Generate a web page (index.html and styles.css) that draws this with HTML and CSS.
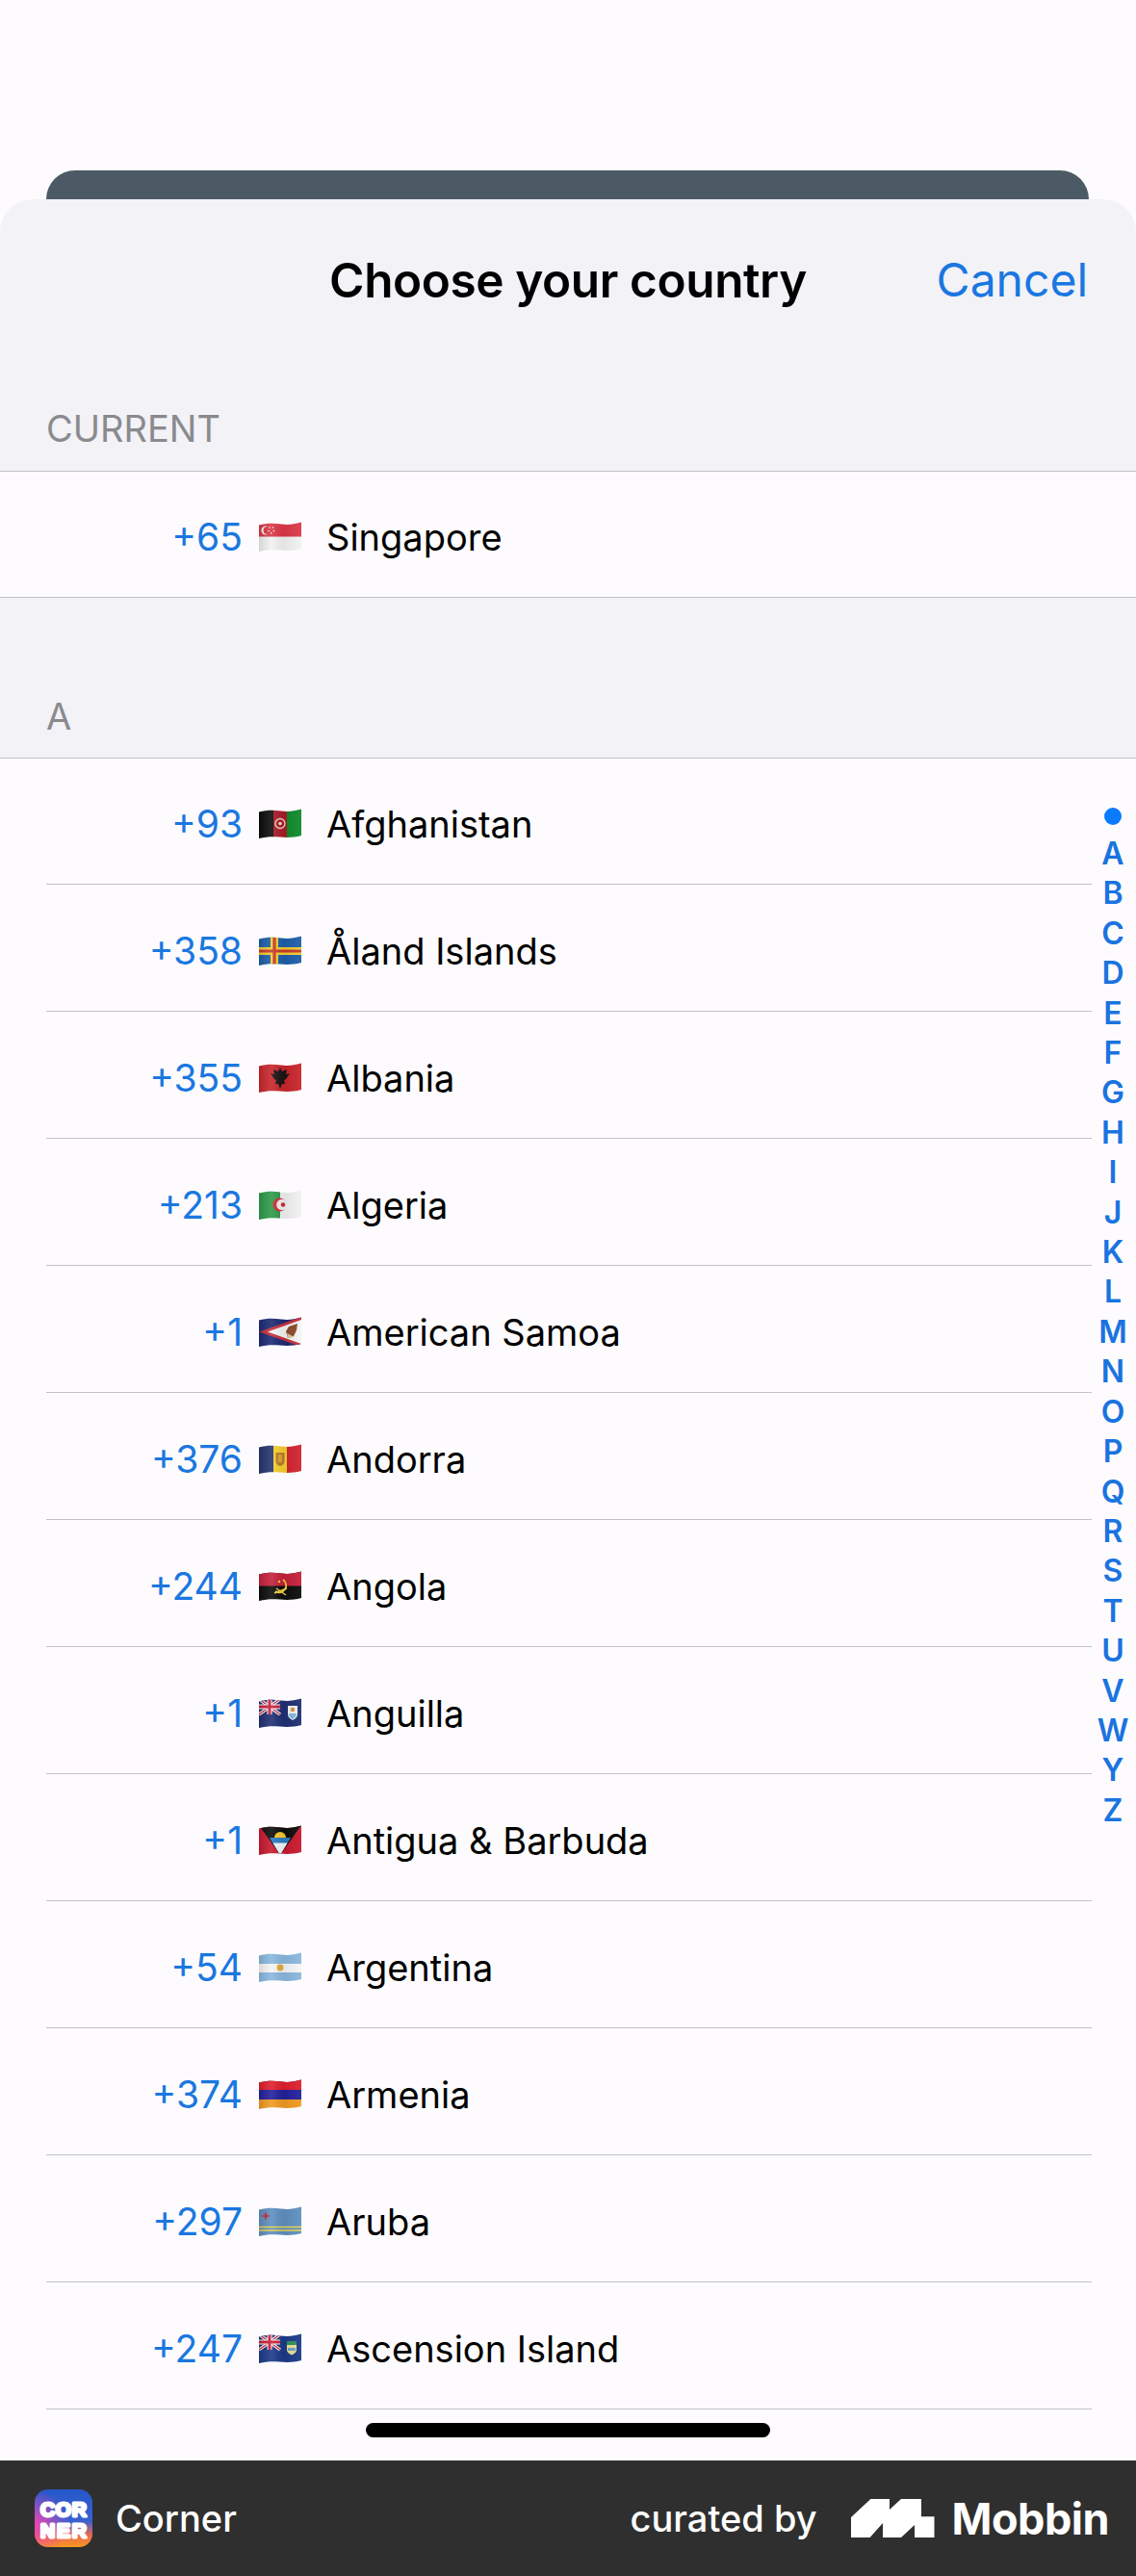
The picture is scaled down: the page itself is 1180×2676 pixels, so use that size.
FILE: index.html
```html
<!DOCTYPE html>
<html lang="en">
<head>
<meta charset="utf-8">
<title>Choose your country</title>
<link rel="stylesheet" href="styles.css">
</head>
<body>
<svg class="defs" width="0" height="0" aria-hidden="true">
  <defs>
    <clipPath id="w"><path d="M0 3.5C8 1.5 15 1.5 23 2.6S36 2.6 44 .5V28C36 30 30 30.4 22 29.6S8 29 0 31Z"/></clipPath>
    <linearGradient id="sh" x1="0" x2="1" y1="0" y2="0">
      <stop offset="0" stop-color="#000" stop-opacity=".12"/>
      <stop offset=".3" stop-color="#fff" stop-opacity=".1"/>
      <stop offset=".6" stop-color="#000" stop-opacity=".06"/>
      <stop offset="1" stop-color="#fff" stop-opacity=".06"/>
    </linearGradient>
    <linearGradient id="corner-bg" x1="0" x2="0" y1="0" y2="1">
      <stop offset="0" stop-color="#2457c9"/>
      <stop offset=".55" stop-color="#3a62d0"/>
      <stop offset=".8" stop-color="#f06a50"/>
      <stop offset="1" stop-color="#f79a1c"/>
    </linearGradient>
    <radialGradient id="corner-pink" cx="0" cy=".6" r=".6">
      <stop offset="0" stop-color="#ee44b0"/>
      <stop offset="1" stop-color="#ee44b0" stop-opacity="0"/>
    </radialGradient>
    <g id="uk">
      <rect width="22" height="16" fill="#1f2f73"/>
      <path d="M0 0L22 16M22 0L0 16" stroke="#fff" stroke-width="3.4"/>
      <path d="M0 0L22 16M22 0L0 16" stroke="#c8203a" stroke-width="1.2"/>
      <path d="M11 0V16M0 8H22" stroke="#fff" stroke-width="5"/>
      <path d="M11 0V16M0 8H22" stroke="#c8203a" stroke-width="3"/>
    </g>
  </defs>
</svg>

<main class="screen">
  <div class="back-card"></div>
  <section class="sheet">
    <header class="sheet-head">
      <h1 class="sheet-title">Choose your country</h1>
      <span class="cancel">Cancel</span>
    </header>

    <h2 class="section-label label-current">CURRENT</h2>
    <ul class="list list-current">
      <li class="row">
        <span class="code">+65</span>
        <svg class="flag" viewBox="0 0 44 32"><g clip-path="url(#w)"><rect width="44" height="32" fill="#f2f2f2"/><path d="M0 0H44V15.5H0Z" fill="#dc3848"/><circle cx="7" cy="9" r="4.6" fill="#f4f4f4"/><circle cx="8.6" cy="9" r="4" fill="#dc3848"/><g fill="#f4f4f4"><circle cx="11" cy="6" r=".8"/><circle cx="14.5" cy="6" r=".8"/><circle cx="10" cy="9.5" r=".8"/><circle cx="15.5" cy="9.5" r=".8"/><circle cx="12.7" cy="11.8" r=".8"/></g><rect width="44" height="32" fill="url(#sh)"/></g></svg>
        <span class="name">Singapore</span>
      </li>
    </ul>

    <h2 class="section-label label-a">A</h2>
    <ul class="list list-a">
      <li class="row inset">
        <span class="code">+93</span>
        <svg class="flag" viewBox="0 0 44 32"><g clip-path="url(#w)"><rect width="15" height="32" fill="#0c0c0c"/><rect x="15" width="15" height="32" fill="#a81c28"/><rect x="29" width="15" height="32" fill="#0f8a2c"/><circle cx="22" cy="15.5" r="5" fill="none" stroke="#f0d8c0" stroke-width="1.3"/><circle cx="22" cy="15.5" r="1.8" fill="#f0d8c0"/><rect width="44" height="32" fill="url(#sh)"/></g></svg>
        <span class="name">Afghanistan</span>
      </li>
      <li class="row inset">
        <span class="code">+358</span>
        <svg class="flag" viewBox="0 0 44 32"><g clip-path="url(#w)"><rect width="44" height="32" fill="#1d5ea8"/><path d="M0 16H44M16 0V32" stroke="#f2cb2e" stroke-width="8"/><path d="M0 16H44M16 0V32" stroke="#c83a2a" stroke-width="3.2"/><rect width="44" height="32" fill="url(#sh)"/></g></svg>
        <span class="name">Åland Islands</span>
      </li>
      <li class="row inset">
        <span class="code">+355</span>
        <svg class="flag" viewBox="0 0 44 32"><g clip-path="url(#w)"><rect width="44" height="32" fill="#c8262c"/><path d="M22 5L24 9L29 7L28 12L32 11L28 17L26 18L27 22L24 22L22 27L20 22L17 22L18 18L16 17L12 11L16 12L15 7L20 9Z" fill="#1a1414"/><rect width="44" height="32" fill="url(#sh)"/></g></svg>
        <span class="name">Albania</span>
      </li>
      <li class="row inset">
        <span class="code">+213</span>
        <svg class="flag" viewBox="0 0 44 32"><g clip-path="url(#w)"><rect width="44" height="32" fill="#f1f1f1"/><rect width="22" height="32" fill="#2f9a4a"/><circle cx="21.5" cy="15.5" r="7" fill="#d42a3a"/><circle cx="24" cy="15.5" r="5.8" fill="#f1f1f1"/><circle cx="25" cy="15.5" r="2.3" fill="#d42a3a"/><rect width="44" height="32" fill="url(#sh)"/></g></svg>
        <span class="name">Algeria</span>
      </li>
      <li class="row inset">
        <span class="code">+1</span>
        <svg class="flag" viewBox="0 0 44 32"><g clip-path="url(#w)"><rect width="44" height="32" fill="#1c2a74"/><path d="M44 0L0 15.5L44 31Z" fill="#c4303c"/><path d="M44 3L9 15.5L44 28Z" fill="#f4f4f4"/><path d="M31 10L40 7L39 14L36 20L30 22L28 15Z" fill="#8a4a2c"/><path d="M29 17L37 21L30 22Z" fill="#d8c89a"/><rect width="44" height="32" fill="url(#sh)"/></g></svg>
        <span class="name">American Samoa</span>
      </li>
      <li class="row inset">
        <span class="code">+376</span>
        <svg class="flag" viewBox="0 0 44 32"><g clip-path="url(#w)"><rect width="15" height="32" fill="#25356f"/><rect x="15" width="14" height="32" fill="#f5cf2f"/><rect x="29" width="15" height="32" fill="#d2232f"/><path d="M17.5 9H26.5V18C26.5 21 24 22.5 22 23C20 22.5 17.5 21 17.5 18Z" fill="#bc7a2a"/><path d="M20 11H24V19H20Z" fill="#d9a431"/><rect width="44" height="32" fill="url(#sh)"/></g></svg>
        <span class="name">Andorra</span>
      </li>
      <li class="row inset">
        <span class="code">+244</span>
        <svg class="flag" viewBox="0 0 44 32"><g clip-path="url(#w)"><rect width="44" height="32" fill="#0c0c0c"/><rect width="44" height="15.5" fill="#c4213a"/><path d="M25 9A7 7 0 1 1 17 21" fill="none" stroke="#f0d040" stroke-width="1.8"/><path d="M16 23L29 18M18 18L28 25" stroke="#f0d040" stroke-width="1.5"/><circle cx="21" cy="11" r="1.2" fill="#f0d040"/><rect width="44" height="32" fill="url(#sh)"/></g></svg>
        <span class="name">Angola</span>
      </li>
      <li class="row inset">
        <span class="code">+1</span>
        <svg class="flag" viewBox="0 0 44 32"><g clip-path="url(#w)"><rect width="44" height="32" fill="#1f2f73"/><use href="#uk" y="1"/><path d="M30 8H40V17C40 20 37 22 35 23C33 22 30 20 30 17Z" fill="#f0f0f0"/><path d="M31 16H39C39 19 37 21 35 22C33 21 31 19 31 16Z" fill="#7fb8dc"/><circle cx="35" cy="12" r="2.2" fill="#d09040"/><rect width="44" height="32" fill="url(#sh)"/></g></svg>
        <span class="name">Anguilla</span>
      </li>
      <li class="row inset">
        <span class="code">+1</span>
        <svg class="flag" viewBox="0 0 44 32"><g clip-path="url(#w)"><rect width="44" height="32" fill="#c8182e"/><path d="M0 0H44L22 31Z" fill="#0c0c0c"/><circle cx="22" cy="13" r="6" fill="#f5c52c"/><path d="M11 13H33L22 31Z" fill="#2b7cc4"/><path d="M14.5 18.5H29.5L22 31Z" fill="#f4f4f4"/><rect width="44" height="32" fill="url(#sh)"/></g></svg>
        <span class="name">Antigua &amp; Barbuda</span>
      </li>
      <li class="row inset">
        <span class="code">+54</span>
        <svg class="flag" viewBox="0 0 44 32"><g clip-path="url(#w)"><rect width="44" height="32" fill="#8ab8df"/><path d="M0 12H44V21H0Z" fill="#f5f5f5"/><circle cx="22" cy="16" r="3.4" fill="#e3a93a"/><rect width="44" height="32" fill="url(#sh)"/></g></svg>
        <span class="name">Argentina</span>
      </li>
      <li class="row inset">
        <span class="code">+374</span>
        <svg class="flag" viewBox="0 0 44 32"><g clip-path="url(#w)"><rect width="44" height="32" fill="#f09a20"/><rect width="44" height="21" fill="#23209c"/><rect width="44" height="11" fill="#e01f2d"/><rect width="44" height="32" fill="url(#sh)"/></g></svg>
        <span class="name">Armenia</span>
      </li>
      <li class="row inset">
        <span class="code">+297</span>
        <svg class="flag" viewBox="0 0 44 32"><g clip-path="url(#w)"><rect width="44" height="32" fill="#5f8fc0"/><path d="M0 21.5H44M0 25H44" stroke="#f0d84a" stroke-width="1.5"/><path d="M7 5L8.3 9L12 10L8.3 11L7 15L5.7 11L2 10L5.7 9Z" fill="#c8243a"/><rect width="44" height="32" fill="url(#sh)"/></g></svg>
        <span class="name">Aruba</span>
      </li>
      <li class="row inset">
        <span class="code">+247</span>
        <svg class="flag" viewBox="0 0 44 32"><g clip-path="url(#w)"><rect width="44" height="32" fill="#1c3a88"/><use href="#uk" y="1"/><path d="M29 8H39V17C39 20 36 21.5 34 22.5C32 21.5 29 20 29 17Z" fill="#e8e090"/><path d="M29 8H39V12H29Z" fill="#2f8f5c"/><path d="M30 15H38V18H30Z" fill="#6aa0c8"/><rect width="44" height="32" fill="url(#sh)"/></g></svg>
        <span class="name">Ascension Island</span>
      </li>
    </ul>

    <nav class="index">
      <span class="index-dot"></span>
      <span>A</span><span>B</span><span>C</span><span>D</span><span>E</span><span>F</span><span>G</span><span>H</span><span>I</span><span>J</span><span>K</span><span>L</span><span>M</span><span>N</span><span>O</span><span>P</span><span>Q</span><span>R</span><span>S</span><span>T</span><span>U</span><span>V</span><span>W</span><span>Y</span><span>Z</span>
    </nav>

    <div class="home-zone"><span class="home-bar"></span></div>
  </section>
</main>

<footer class="footer">
  <div class="app">
    <svg class="app-icon" viewBox="0 0 60 60">
      <rect width="60" height="60" rx="14" fill="url(#corner-bg)"/>
      <rect width="60" height="60" rx="14" fill="url(#corner-pink)"/>
      <g class="app-icon-text">
        <text x="6" y="28" textLength="48" lengthAdjust="spacing">COR</text>
        <text x="6" y="50" textLength="48" lengthAdjust="spacing">NER</text>
      </g>
    </svg>
    <span class="app-name">Corner</span>
  </div>
  <div class="credit">
    <span class="curated">curated by</span>
    <svg class="mobbin-mark" viewBox="0 0 87 40"><path d="M0 19L20.4 0H40V11L52 0H73V18.3H86.5V40H66V27L52 40H33V25L19.6 40H0Z" fill="#fff"/></svg>
    <span class="mobbin">Mobbin</span>
  </div>
</footer>
</body>
</html>
```

FILE: styles.css
```css
* { box-sizing: border-box; }

html, body { margin: 0; padding: 0; }

body {
  width: 1180px;
  background: #fdfbfd;
  font-family: Inter, "Liberation Sans", sans-serif;
  color: #000;
}

.defs { display: block; height: 0; width: 0; }

.screen {
  height: 2556px;
  padding-top: 177px;
  overflow: hidden;
}

.back-card {
  height: 30px;
  margin: 0 49px 0 48px;
  background: #4c5a65;
  border-radius: 30px 30px 0 0;
}

.sheet {
  position: relative;
  display: flex;
  flex-direction: column;
  height: 2349px;
  background: #f2f2f7;
  border-radius: 34px 34px 0 0;
}

.sheet-head {
  display: flex;
  flex: none;
  justify-content: center;
  align-items: center;
  height: 172px;
  padding-bottom: 5px;
}

.sheet-title {
  margin: 0;
  font-size: 49.5px;
  font-weight: 600;
  letter-spacing: -0.4px;
}

.cancel {
  position: absolute;
  top: 54px;
  right: 50px;
  font-size: 48px;
  line-height: 60px;
  color: #1a77e0;
}

.section-label {
  flex: none;
  margin: 0;
  padding-left: 48px;
  font-size: 38px;
  font-weight: 400;
  color: #8a8a8e;
}

.label-current {
  height: 110px;
  padding-top: 43px;
  line-height: 46px;
}

.label-a {
  height: 166px;
  padding-top: 100px;
  line-height: 46px;
}

.list {
  flex: none;
  margin: 0;
  padding: 0;
  list-style: none;
  background: #fdfbfd;
  border-top: 1px solid #c2c2c4;
}

.list-current { border-bottom: 1px solid #c2c2c4; }

.list-a { flex: 1; }

.row {
  display: flex;
  align-items: center;
  height: 130px;
  padding-top: 6px;
}

.inset {
  height: 132px;
  margin-right: 46px;
  margin-left: 48px;
  border-bottom: 1px solid #c2c2c4;
}

.inset:first-child { height: 131px; }

.code {
  flex: none;
  width: 252px;
  font-size: 39px;
  line-height: 48px;
  color: #1a77e0;
  text-align: right;
}

.inset .code { width: 204px; }

.flag {
  flex: none;
  display: block;
  width: 44px;
  height: 32px;
  margin-left: 17px;
}

.name {
  margin-left: 26px;
  font-size: 38px;
  line-height: 48px;
}

.index {
  position: absolute;
  top: 632px;
  right: 1px;
  display: flex;
  flex-direction: column;
  align-items: center;
  width: 46px;
  font-size: 32px;
  font-weight: 600;
  line-height: 41.4px;
  color: #1a73e0;
}

.index-dot {
  width: 18px;
  height: 18px;
  margin-bottom: 9px;
  background: #0a7aff;
  border-radius: 50%;
}

.home-zone {
  position: absolute;
  right: 0;
  bottom: 0;
  left: 0;
  display: flex;
  justify-content: center;
  height: 39px;
}

.home-bar {
  display: block;
  width: 420px;
  height: 15px;
  background: #000;
  border-radius: 8px;
}

.footer {
  display: flex;
  justify-content: space-between;
  align-items: center;
  height: 120px;
  padding: 0 28px 0 36px;
  background: #2f2f2f;
  color: #fff;
}

.app, .credit {
  display: flex;
  align-items: center;
}

.app-icon {
  display: block;
  width: 60px;
  height: 60px;
}

.app-icon-text text {
  font-family: "Liberation Sans", sans-serif;
  font-size: 21px;
  font-weight: 700;
  fill: #fff;
  stroke: #fff;
  stroke-width: 3px;
  stroke-linejoin: round;
}

.app-name {
  margin-left: 24px;
  font-size: 38px;
  font-weight: 500;
}

.curated {
  font-size: 38px;
  font-weight: 500;
}

.mobbin-mark {
  display: block;
  width: 87px;
  height: 40px;
  margin-left: 35px;
}

.mobbin {
  margin-left: 18px;
  font-size: 45px;
  font-weight: 700;
  letter-spacing: -0.5px;
}
```
